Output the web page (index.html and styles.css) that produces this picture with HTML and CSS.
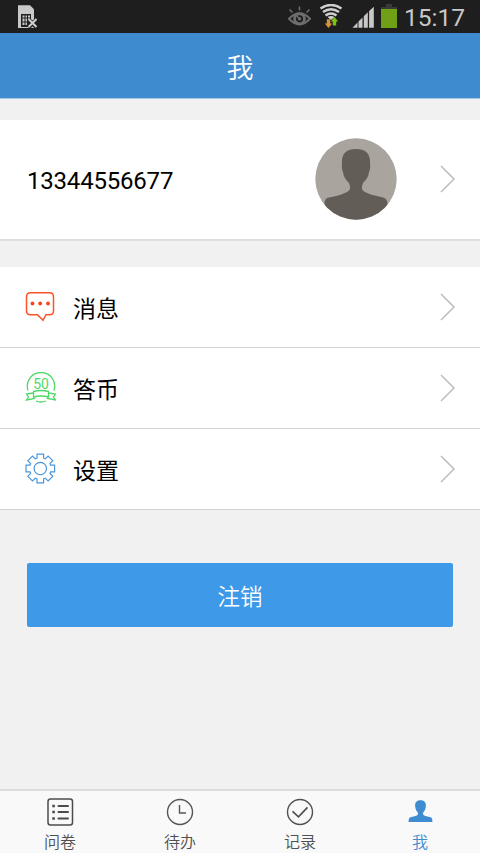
FILE: index.html
```html
<!DOCTYPE html>
<html lang="zh-CN">
<head>
<meta charset="utf-8">
<title>我</title>
<link rel="stylesheet" href="styles.css">
</head>
<body>
<div class="screen">
  <div class="status">
    <svg class="sim" width="20" height="24" viewBox="0 0 20 24">
      <path d="M0 .3h12l4 4V23H0z" fill="#c9c9c9"/>
      <path d="M3 9h10v13H3z" fill="#222"/>
      <path d="M4.500 10.500h2v2h-2zM7.500 10.500h1.500v2H7.500zM10 10.500h2v2h-2zM4.500 13.500h2v3h-2zM7.500 13.500h1.500v3H7.500zM10 13.500h2v2h-2zM4.500 17.500h2v2.500h-2zM7.500 17.500h1.500v2.500H7.500z" fill="#c9c9c9"/>
      <path d="M10.500 14.500l8 8M18.500 14.500l-8 8" stroke="#222" stroke-width="4"/>
      <path d="M10.500 14l8 8M18.500 14l-8 8" stroke="#d0d0d0" stroke-width="2"/>
    </svg>
    <svg class="signals" width="88" height="28" viewBox="0 0 88 28">
      <g fill="none" stroke="#6d6d6d">
        <path d="M1 14.800Q11.500 3.500 22 14.800Q11.500 26 1 14.800z" stroke-width="2"/>
        <circle cx="11.500" cy="14.800" r="5" stroke-width="2.800"/>
        <path d="M11.500 2.500v4M1.500 5.500l3 3M21.500 5.500l-3 3M8.500 12l3 2.500" stroke-width="1.500"/>
      </g>
      <circle cx="11.500" cy="14.800" r="1.800" fill="#6d6d6d"/>
      <g fill="none" stroke="#cfcfcf" stroke-width="2.500">
        <path d="M32.500 4.500Q43-2.500 53.500 4.500"/>
        <path d="M35 8Q43 2.500 51 8"/>
        <path d="M37.500 11.500Q43 7.500 48.500 11.500"/>
      </g>
      <path d="M39.500 13Q43 11 46.500 13L43 16z" fill="#cfcfcf"/>
      <path d="M38.800 15.200h3.400v4.300h2l-3.700 4.500-3.700-4.500h2z" fill="#d8923a"/>
      <path d="M44.800 21.500h3.400V17.500h2l-3.700-4.500-3.700 4.500h2z" fill="#7fc00c"/>
      <path d="M64.500 23.800L69.500 18.500V23.800zM70.500 17.500L74.500 13.500V23.800H70.500zM75.800 12.300L79.800 8.300V23.800H75.800zM81.100 7L85.800 2.800V23.800H81.100z" fill="#c8c8c8"/>
    </svg>
    <svg class="battery" width="16" height="24" viewBox="0 0 16 24">
      <path d="M5 0h6v3h5v3H0V3h5z" fill="#3a3a3a"/>
      <path d="M0 5h16v19H0z" fill="#70a016"/>
    </svg>
    <span class="time">15:17</span>
  </div>
  <header class="header">我</header>
  <section class="profile">
    <span class="phone">13344556677</span>
    <svg class="avatar" width="82" height="82" viewBox="0 0 82 82">
      <defs><clipPath id="round"><circle cx="41" cy="41" r="40.700"/></clipPath></defs>
      <g clip-path="url(#round)">
        <path d="M0 0h82v82H0z" fill="#aaa49f"/>
        <path d="M27 27C26 16 31 11 41 11s15 5 14 16c.5 2 .3 4-1 7-.5 5-3 8-6 11-1.500 4-2 7 2 9 7 3.500 13 4 18 5.500 3.500 1 4.500 3 4.500 7.500v16H9.500V67c0-4.500 1-7 4.500-7.500 5-1 11-2 18-5.500 4-2 3.500-5 2-9-3-3-5.500-6-6-11-1.300-3-1.500-5-1-7z" fill="#635d58"/>
      </g>
    </svg>
    <svg class="arrow" width="16" height="28" viewBox="0 0 16 28"><path d="M1 1l13 13L1 27"/></svg>
  </section>
  <nav class="list">
    <div class="row">
      <svg class="icon" width="32" height="32" viewBox="0 0 32 32" fill="none" stroke="#fb5227" stroke-width="1.500">
        <path d="M6.500 1.700h19q4 0 4 4v14q0 4-4 4H22L19 29.300 13.500 23.700H6.500q-4 0-4-4v-14q0-4 4-4z"/>
        <g fill="#fb4218" stroke="none"><circle cx="8.500" cy="12.500" r="1.900"/><circle cx="16.200" cy="12.500" r="1.900"/><circle cx="24" cy="12.500" r="1.900"/></g>
      </svg>
      <span class="label">消息</span>
      <svg class="arrow" width="16" height="28" viewBox="0 0 16 28"><path d="M1 1l13 13L1 27"/></svg>
    </div>
    <div class="row">
      <svg class="icon" width="32" height="32" viewBox="0 0 32 32" fill="none" stroke="#50d866" stroke-width="1.300">
        <path d="M4 18.500A13.700 13.700 0 1 1 30 18.500M12 29Q17 31 22 29"/>
        <path d="M9.500 19.500Q17 17.500 24.500 19.500V25Q17 23 9.500 25zM9.500 21L2.500 22l2 3L2.500 28l8-1.500V25M24.500 21l7 1-2 3 2 3-8-1.500V25"/>
        <text class="coin" x="17" y="16.800">50</text>
      </svg>
      <span class="label">答币</span>
      <svg class="arrow" width="16" height="28" viewBox="0 0 16 28"><path d="M1 1l13 13L1 27"/></svg>
    </div>
    <div class="row">
      <svg class="icon" width="32" height="32" viewBox="-16.300 -15.500 32 32" fill="none" stroke="#4a96dc" stroke-width="1.200">
        <path d="M-3.300-10.300V-14.300H3.300V-10.300L4.950-9.620 7.800-12.470 12.470-7.800 9.620-4.950 10.300-3.300H14.300V3.300H10.300L9.620 4.950 12.470 7.800 7.800 12.470 4.950 9.620 3.300 10.300V14.300H-3.300V10.300L-4.950 9.620-7.800 12.470-12.470 7.800-9.620 4.950-10.300 3.300H-14.300V-3.300H-10.300L-9.620-4.950-12.470-7.800-7.800-12.470-4.950-9.620z"/>
        <circle r="6.200"/>
      </svg>
      <span class="label">设置</span>
      <svg class="arrow" width="16" height="28" viewBox="0 0 16 28"><path d="M1 1l13 13L1 27"/></svg>
    </div>
  </nav>
  <button class="logout">注销</button>
  <footer class="tabs">
    <div class="tab">
      <svg width="28" height="28" viewBox="0 0 28 28" fill="none" stroke="#4c4c4c" stroke-width="1.500">
        <rect x="2" y="1" width="24.500" height="26" rx="2.500"/>
        <path d="M12.500 8h9.500M12.500 14h9.500M12.500 20.500h9.500" stroke-width="2" stroke-linecap="round"/>
        <path d="M6.300 8h2.600M6.300 14h2.600M6.300 20.500h2.600" stroke-width="2.600"/>
      </svg>
      <span>问卷</span>
    </div>
    <div class="tab">
      <svg width="28" height="28" viewBox="0 0 28 28" fill="none" stroke="#555" stroke-width="1.400">
        <circle cx="14" cy="14" r="12.500"/><path d="M13.500 7v8h6.500"/>
      </svg>
      <span>待办</span>
    </div>
    <div class="tab">
      <svg width="28" height="28" viewBox="0 0 28 28" fill="none" stroke="#505050" stroke-width="1.400">
        <circle cx="14" cy="14" r="12.500"/><path d="M6.500 13.300l6 5.500L21.500 9.300" stroke-width="1.700"/>
      </svg>
      <span>记录</span>
    </div>
    <div class="tab active">
      <svg width="28" height="28" viewBox="0 0 28 28">
        <path d="M14.500 2.300c4 0 5.800 2.400 5.300 6.200-.2 2.500-1.200 4.500-2.600 6-.5 1.700 0 2.500 1.500 3.200 2.400.9 5 1 6.500 1.800 1 .8 1.200 2.500 1.200 4.500H2.600c0-2 .2-3.700 1.200-4.500 1.500-.8 4.100-.9 6.500-1.800 1.500-.7 2-1.500 1.500-3.200-1.400-1.500-2.400-3.500-2.600-6-.5-3.800 1.300-6.200 5.300-6.200z" fill="#3f8cd0"/>
      </svg>
      <span>我</span>
    </div>
  </footer>
</div>
</body>
</html>
```

FILE: styles.css
```css
* {
  box-sizing: border-box;
}

body {
  margin: 0;
  font-family: Roboto, "Noto Sans CJK SC", sans-serif;
}

svg {
  display: block;
  flex: none;
}

.screen {
  display: flex;
  flex-direction: column;
  width: 480px;
  height: 853px;
  overflow: hidden;
  background: #f1f1f1;
}

.status {
  display: flex;
  flex: none;
  align-items: flex-start;
  height: 33px;
  padding: 4px 17px 0 18px;
  background: #1e1e1e;
}

.sim {
  margin-top: 1px;
}

.signals {
  margin-left: auto;
}

.battery {
  margin-left: 5px;
}

.time {
  width: 59px;
  margin-left: 7px;
  color: #c8c8c8;
  font-size: 24.5px;
  line-height: 28px;
  white-space: nowrap;
}

.header {
  flex: none;
  height: 66px;
  padding-top: 3px;
  border-bottom: 1px solid #a5c7e6;
  background: #3e8bcf;
  color: #fff;
  font-size: 27px;
  font-weight: 350;
  line-height: 67px;
  text-align: center;
}

.profile {
  display: flex;
  flex: none;
  align-items: center;
  height: 121px;
  margin-top: 21px;
  padding: 0 24px 1px 27px;
  border-bottom: 2px solid #dedede;
  background: #fff;
}

.phone {
  flex: 1;
  padding-top: 3px;
  color: #000;
  font-size: 24px;
  letter-spacing: -0.2px;
}

.avatar {
  margin-right: 43px;
}

.arrow {
  fill: none;
  stroke: #bdbdbd;
  stroke-width: 1.5;
}

.list {
  flex: none;
  margin-top: 26px;
}

.row {
  display: flex;
  align-items: center;
  height: 81px;
  padding: 0 24px;
  border-bottom: 1px solid #d4d4d4;
  background: #fff;
}

.label {
  flex: 1;
  margin-left: 17px;
  padding-top: 5px;
  color: #000;
  font-size: 23px;
  line-height: 34px;
}

.coin {
  fill: #50d866;
  stroke: none;
  font-size: 14px;
  font-weight: 400;
  text-anchor: middle;
}

.logout {
  flex: none;
  height: 64px;
  margin: 53px 27px 0;
  padding: 0;
  border: 0;
  border-radius: 2px;
  background: #3e9ae8;
  color: #fff;
  font-family: inherit;
  font-size: 22.5px;
  font-weight: 350;
}

.tabs {
  display: flex;
  flex: none;
  height: 64px;
  margin-top: auto;
  border-top: 2px solid #dcdcdc;
  background: #f9f9f9;
}

.tab {
  display: flex;
  flex: 1;
  flex-direction: column;
  align-items: center;
  padding-top: 7px;
  color: #505050;
  font-size: 16px;
  font-weight: 350;
  line-height: 24px;
}

.tab span {
  margin-top: 5px;
}

.active {
  color: #3f8cd0;
}
```
